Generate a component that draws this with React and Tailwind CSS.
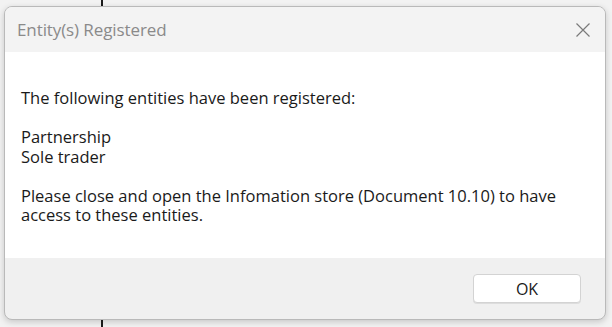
export default function App() {
  return (
    <div className="relative w-[612px] h-[327px] overflow-hidden bg-[#f2f2f2] font-['Open_Sans',sans-serif]">
      {/* line behind the dialog */}
      <div className="absolute left-[101px] top-0 h-full w-[2px] bg-[#1c1c1c]" />

      <div className="relative ml-[4px] mt-[6px] w-[602px] h-[314px] flex flex-col rounded-[8px] border border-[#b9b9b9] bg-[#f0f0f0] shadow-[0_2px_6px_rgba(0,0,0,0.18)] overflow-hidden">
        {/* title bar */}
        <div className="h-[45px] shrink-0 flex items-center justify-between bg-[#f3f3f3] pl-[12px] pr-[14px]">
          <span className="text-[17px] text-[#8a8a8a] tracking-[-0.1px]">Entity(s) Registered</span>
          <svg width="16" height="16" viewBox="0 0 16 16" className="text-[#7a7a7a]">
            <path d="M1.5 1.5L14.5 14.5M14.5 1.5L1.5 14.5" stroke="currentColor" strokeWidth="1.2" />
          </svg>
        </div>

        {/* body */}
        <div className="h-[206px] shrink-0 bg-white pl-[16px] pt-[36px] text-[16.5px] leading-[19.5px] text-[#1a1a1a]">
          <p>The following entities have been registered:</p>
          <p className="mt-[19.5px]">Partnership</p>
          <p>Sole trader</p>
          <p className="mt-[19.5px]">
            Please close and open the Infomation store (Document 10.10) to have
            <br />
            access to these entities.
          </p>
        </div>

        {/* footer */}
        <div className="flex-1 flex justify-end items-start pt-[16px] pr-[24px]">
          <button className="w-[108px] h-[29px] rounded-[4px] border border-[#d3d3d3] bg-white text-[16px] text-[#1a1a1a] shadow-[0_1px_0_rgba(0,0,0,0.08)]">
            OK
          </button>
        </div>
      </div>
    </div>
  );
}
